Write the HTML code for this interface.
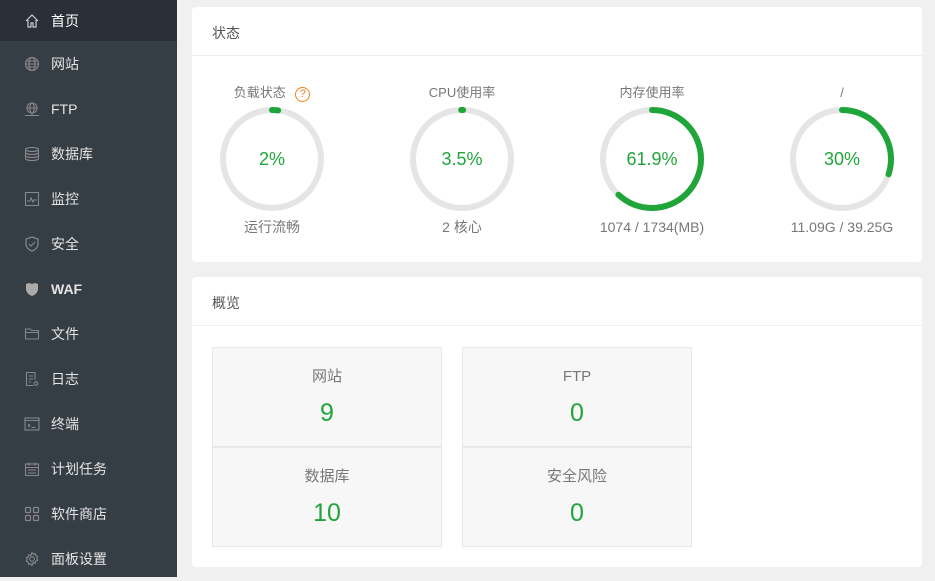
<!DOCTYPE html>
<html><head><meta charset="utf-8"><style>
*{margin:0;padding:0;box-sizing:border-box}
body{width:935px;height:577px;overflow:hidden;background:#f0f0f0;font-family:"Liberation Sans","Noto Sans CJK SC",sans-serif;position:relative}
.side{position:absolute;left:0;top:0;width:177px;height:577px;background:#353d45}
.item{position:absolute;left:0;width:177px;height:45px;color:#e4e4e4;font-size:14px}
.item.act{background:#2a3037;height:41px;color:#fff}
.item span{position:absolute;left:51px;top:50%;transform:translateY(-50%);line-height:20px}
.item svg{position:absolute;left:24px;top:50%;transform:translateY(-50%)}
.card{position:absolute;left:192px;width:730px;background:#fff;border-radius:4px}
.hd{height:49px;border-bottom:1px solid #eee;font-size:14px;color:#555;padding-left:20px;line-height:53px}
.g{position:absolute;width:150px;text-align:center;color:#777;font-size:13px}
.g .t{position:absolute;top:0;width:150px;left:0;line-height:18px}
.g svg{position:absolute;left:23px;top:23px}
.g .v{position:absolute;top:63px;width:150px;left:0;color:#20a53a;font-size:18px;line-height:24px}
.g .b{position:absolute;top:134px;width:150px;left:0;line-height:18px;font-size:14px}
.box{position:absolute;width:230px;height:100px;background:#f7f7f7;border:1px solid #e8e8e8;text-align:center}
.box .l{position:absolute;top:19px;width:100%;line-height:20px;font-size:15px;color:#777}
.box .n{position:absolute;top:50px;width:100%;line-height:30px;font-size:25px;color:#20a53a}
</style></head><body>
<div class="side">
<div class="item act" style="top:0"><svg width="16" height="16" viewBox="0 0 16 16" fill="none" stroke="#ccc" stroke-width="1.2"><path d="M2 8L8 2l6 6M4 7v7h3v-4h2v4h3V7"/></svg><span>首页</span></div>
<div class="item" style="top:41px"><svg width="16" height="16" viewBox="0 0 16 16" fill="none" stroke="#888" stroke-width="1.1"><circle cx="8" cy="8" r="6.5"/><ellipse cx="8" cy="8" rx="3" ry="6.5"/><path d="M1.5 8h13M2.5 5h11M2.5 11h11"/></svg><span>网站</span></div>
<div class="item" style="top:86px"><svg width="16" height="16" viewBox="0 0 16 16" fill="none" stroke="#888" stroke-width="1.1"><circle cx="8" cy="7" r="5"/><ellipse cx="8" cy="7" rx="2.2" ry="5"/><path d="M3 7h10M8 12v2M1 14.5h14"/></svg><span>FTP</span></div>
<div class="item" style="top:131px"><svg width="16" height="16" viewBox="0 0 16 16" fill="none" stroke="#888" stroke-width="1.1"><ellipse cx="8" cy="3.5" rx="6.5" ry="2"/><path d="M1.5 3.5v9c0 1.1 2.9 2 6.5 2s6.5-.9 6.5-2v-9M1.5 6.5c0 1.1 2.9 2 6.5 2s6.5-.9 6.5-2M1.5 9.5c0 1.1 2.9 2 6.5 2s6.5-.9 6.5-2"/></svg><span>数据库</span></div>
<div class="item" style="top:176px"><svg width="16" height="16" viewBox="0 0 16 16" fill="none" stroke="#888" stroke-width="1.1"><rect x="1.5" y="1.5" width="13" height="13"/><path d="M3 10h3l1-3 2 4 1-2h3"/></svg><span>监控</span></div>
<div class="item" style="top:221px"><svg width="16" height="16" viewBox="0 0 16 16" fill="none" stroke="#888" stroke-width="1.2"><path d="M8 1l6 2v5c0 3.5-3 6-6 7-3-1-6-3.5-6-7V3z"/><path d="M5 8l2 2 4-4"/></svg><span>安全</span></div>
<div class="item" style="top:266px"><svg width="16" height="16" viewBox="0 0 16 16"><path d="M2 3l3-1 3 1 3-1 3 1v5c0 3.5-3 6-6 7-3-1-6-3.5-6-7z" fill="#aaa"/></svg><span style="font-weight:bold">WAF</span></div>
<div class="item" style="top:311px"><svg width="16" height="16" viewBox="0 0 16 16" fill="none" stroke="#888" stroke-width="1.1"><path d="M1.5 3h5l1 1.5h7V13h-13zM1.5 6.5h13"/></svg><span>文件</span></div>
<div class="item" style="top:356px"><svg width="16" height="16" viewBox="0 0 16 16" fill="none" stroke="#888" stroke-width="1.1"><path d="M11 9V1.5H2.5v13h7M5 5h4M5 8h4M5 11h2"/><circle cx="12" cy="12.5" r="1.8"/></svg><span>日志</span></div>
<div class="item" style="top:401px"><svg width="16" height="16" viewBox="0 0 16 16" fill="none" stroke="#888" stroke-width="1.1"><rect x="1" y="2" width="14" height="12"/><path d="M1 4.5h14M4 8l2 1.5L4 11M7.5 11.5h4"/></svg><span>终端</span></div>
<div class="item" style="top:446px"><svg width="16" height="16" viewBox="0 0 16 16" fill="none" stroke="#888" stroke-width="1.1"><rect x="1.5" y="3" width="13" height="11.5"/><path d="M5 1.5v3M11 1.5v3M1.5 6.5h13M4 9h8M4 12h8"/></svg><span>计划任务</span></div>
<div class="item" style="top:491px"><svg width="16" height="16" viewBox="0 0 16 16" fill="none" stroke="#888" stroke-width="1.2"><rect x="1.5" y="1.5" width="5" height="5" rx="1"/><rect x="9.5" y="1.5" width="5" height="5" rx="1"/><rect x="1.5" y="9.5" width="5" height="5" rx="1"/><rect x="9.5" y="9.5" width="5" height="5" rx="1"/></svg><span>软件商店</span></div>
<div class="item" style="top:536px"><svg width="16" height="16" viewBox="0 0 16 16" fill="none" stroke="#888" stroke-width="1.1"><circle cx="8" cy="8" r="2.3"/><path d="M8 1.5l1.3 1.7 2-.6.4 2 1.9.9-.8 1.9.8 1.9-1.9.9-.4 2-2-.6L8 14.5l-1.3-1.7-2 .6-.4-2-1.9-.9.8-1.9-.8-1.9 1.9-.9.4-2 2 .6z"/></svg><span>面板设置</span></div>
</div>

<div class="card" style="top:7px;height:255px">
<div class="hd">状态</div>
<div class="g" style="left:5px;top:77px"><div class="t">负载状态 <span style="display:inline-block;width:15px;height:15px;border:1.3px solid #f0821e;border-radius:50%;color:#f0821e;font-size:11px;line-height:13px;margin-left:6px;vertical-align:0">?</span></div>
<svg width="104" height="104"><circle cx="52" cy="52" r="49" fill="none" stroke="#e5e5e5" stroke-width="6"/><circle cx="52" cy="52" r="49" fill="none" stroke="#20a53a" stroke-width="6" stroke-linecap="round" stroke-dasharray="6.2 400" transform="rotate(-90 52 52)"/></svg>
<div class="v">2%</div><div class="b">运行流畅</div></div>
<div class="g" style="left:195px;top:77px"><div class="t">CPU使用率</div>
<svg width="104" height="104"><circle cx="52" cy="52" r="49" fill="none" stroke="#e5e5e5" stroke-width="6"/><circle cx="52" cy="52" r="49" fill="none" stroke="#20a53a" stroke-width="6" stroke-linecap="round" stroke-dasharray="2 400" transform="rotate(-91 52 52)"/></svg>
<div class="v">3.5%</div><div class="b">2 核心</div></div>
<div class="g" style="left:385px;top:77px"><div class="t">内存使用率</div>
<svg width="104" height="104"><circle cx="52" cy="52" r="49" fill="none" stroke="#e5e5e5" stroke-width="6"/><circle cx="52" cy="52" r="49" fill="none" stroke="#20a53a" stroke-width="6" stroke-linecap="round" stroke-dasharray="190.6 400" transform="rotate(-90 52 52)"/></svg>
<div class="v">61.9%</div><div class="b">1074 / 1734(MB)</div></div>
<div class="g" style="left:575px;top:77px"><div class="t">/</div>
<svg width="104" height="104"><circle cx="52" cy="52" r="49" fill="none" stroke="#e5e5e5" stroke-width="6"/><circle cx="52" cy="52" r="49" fill="none" stroke="#20a53a" stroke-width="6" stroke-linecap="round" stroke-dasharray="92.4 400" transform="rotate(-90 52 52)"/></svg>
<div class="v">30%</div><div class="b">11.09G / 39.25G</div></div>
</div>

<div class="card" style="top:277px;height:290px">
<div class="hd">概览</div>
<div class="box" style="left:20px;top:70px"><div class="l">网站</div><div class="n">9</div></div>
<div class="box" style="left:270px;top:70px"><div class="l">FTP</div><div class="n">0</div></div>
<div class="box" style="left:20px;top:170px"><div class="l">数据库</div><div class="n">10</div></div>
<div class="box" style="left:270px;top:170px"><div class="l">安全风险</div><div class="n">0</div></div>
</div>
</body></html>
